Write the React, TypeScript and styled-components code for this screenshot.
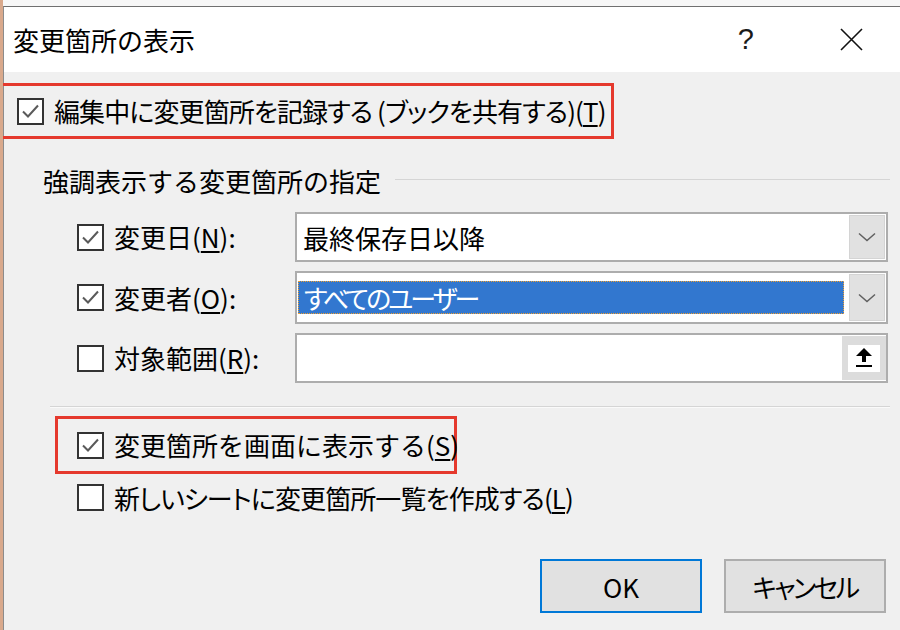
import React from 'react';
import styled, { createGlobalStyle } from 'styled-components';

const GlobalStyle = createGlobalStyle`
  html, body {
    margin: 0;
    padding: 0;
  }
  body {
    background: #f7f7f7;
    font-family: "Noto Sans CJK JP", "Noto Sans", sans-serif;
    color: #000;
  }
`;

const Page = styled.div`
  width: 900px;
  height: 630px;
  box-sizing: border-box;
  overflow: hidden;
  padding-top: 6px;
  border-left: 3px solid #d9a98c;
  background: #f7f7f7;
`;

const Window = styled.div`
  height: 100%;
  display: flex;
  flex-direction: column;
  border-top: 1px solid #707070;
  border-left: 1px solid #8c8c8c;
  background: #f0f0f0;
`;

const TitleBar = styled.div`
  height: 65px;
  flex-shrink: 0;
  display: flex;
  align-items: center;
  padding-left: 9px;
  background: #fff;
`;

const Title = styled.div`
  flex: 1;
  font-size: 26px;
  line-height: 1;
`;

const HelpMark = styled.div`
  font-family: "Liberation Sans", sans-serif;
  font-size: 29px;
  line-height: 1;
  color: #1a1a1a;
  margin-right: 86px;
`;

const CloseIcon = styled.svg`
  width: 23px;
  height: 23px;
  margin-right: 37px;
`;

const Body = styled.div`
  flex: 1;
  display: flex;
  flex-direction: column;
`;

const Highlight = styled.div<{ $left: number; $width: number; $height: number; $pad: number; $top: number }>`
  margin-top: ${p => p.$top}px;
  margin-left: ${p => p.$left}px;
  width: ${p => p.$width}px;
  height: ${p => p.$height}px;
  box-sizing: border-box;
  border: 3px solid #e5392d;
  padding-left: ${p => p.$pad}px;
  display: flex;
  align-items: center;
`;

/* proportional kana, closer to the narrow UI font of the dialog */
const CheckOption = styled.label<{ $tight?: boolean }>`
  display: flex;
  align-items: center;
  gap: 10px;
  font-size: 26px;
  line-height: 1;
  white-space: nowrap;
  font-feature-settings: ${p => (p.$tight ? '"palt"' : 'normal')};
  letter-spacing: ${p => (p.$tight ? '-0.9px' : 'normal')};
`;

const Box = styled.span`
  width: 27px;
  height: 27px;
  box-sizing: border-box;
  border: 2px solid #333;
  background: #fff;
  display: flex;
  align-items: center;
  justify-content: center;
  flex-shrink: 0;
`;

const Key = styled.u`
  text-decoration-thickness: 2px;
  text-underline-offset: 3px;
`;

const GroupHeader = styled.div`
  margin-top: 24px;
  margin-left: 39px;
  margin-right: 10px;
  height: 34px;
  display: flex;
  align-items: center;
  gap: 14px;
  font-size: 26px;
`;

const GroupLine = styled.div`
  flex: 1;
  height: 1px;
  background: #d5d5d5;
  margin-top: -2px;
`;

const Fields = styled.div`
  margin-top: 15px;
  margin-left: 73px;
  display: grid;
  grid-template-columns: 218px 593px;
  row-gap: 9px;
  align-items: center;
`;

const Combo = styled.div<{ $h: number }>`
  height: ${p => p.$h}px;
  box-sizing: border-box;
  border: 2px solid #adadad;
  background: #fff;
  display: flex;
`;

const ComboText = styled.div`
  flex: 1;
  display: flex;
  align-items: center;
  padding-left: 6px;
  font-size: 26px;
`;

const Selection = styled.div`
  flex: 1;
  display: flex;
  align-items: center;
  margin: 8px 3px 8px 1px;
  padding-left: 5px;
  background: #3277cf;
  border: 1px dotted #f0a030;
  color: #fff;
  font-size: 26px;
  font-feature-settings: "palt";
  letter-spacing: -3px;
`;

const DropButton = styled.div`
  width: 34px;
  margin: 1px 1px 1px 2px;
  background: #e1e1e1;
  border: 1px solid #d4d4d4;
  display: flex;
  align-items: center;
  justify-content: center;
`;

const UploadButton = styled.div`
  width: 44px;
  margin: 1px 0 1px 0;
  background: #dcdcdc;
  display: flex;
  align-items: center;
  justify-content: center;
`;

const UploadFace = styled.div`
  width: 32px;
  height: 27px;
  background: #fff;
  display: flex;
`;

const Divider = styled.div`
  margin-top: 23px;
  margin-left: 46px;
  margin-right: 10px;
  border-top: 1px solid #d5d5d5;
  border-bottom: 1px solid #fafafa;
`;

const PlainRow = styled.div`
  margin-top: 10px;
  margin-left: 73px;
  height: 27px;
  display: flex;
  align-items: center;
`;

const ButtonRow = styled.div`
  margin-top: 48px;
  padding-right: 14px;
  display: flex;
  justify-content: flex-end;
  gap: 22px;
`;

const DialogButton = styled.button<{ $default?: boolean }>`
  width: 162px;
  height: 54px;
  box-sizing: border-box;
  background: #e1e1e1;
  border: 2px solid ${p => (p.$default ? '#0078d7' : '#adadad')};
  font-family: "Noto Sans CJK JP", "Noto Sans", sans-serif;
  font-size: 26px;
  font-feature-settings: "palt";
  letter-spacing: ${p => (p.$default ? 'normal' : '-2.5px')};
  color: #000;
  padding: 0;
`;

const Checkbox = ({ checked }: { checked?: boolean }) => (
  <Box>
    {checked && (
      <svg width="23" height="23" viewBox="0 0 23 23">
        <polyline points="4,11.5 9,16.5 19,5.5" fill="none" stroke="#5a5a5a" strokeWidth="2" />
      </svg>
    )}
  </Box>
);

const Chevron = () => (
  <svg width="18" height="10" viewBox="0 0 18 10">
    <polyline points="1,1.5 9,8.5 17,1.5" fill="none" stroke="#606060" strokeWidth="1.5" />
  </svg>
);

const UploadArrow = () => (
  <svg width="32" height="27" viewBox="0 0 32 27">
    <polygon points="8,11 16,3 24,11" fill="#000" />
    <rect x="14" y="10" width="4" height="7" fill="#000" />
    <rect x="8" y="20" width="16" height="2" fill="#000" />
  </svg>
);

export default function App() {
  return (
    <>
      <GlobalStyle />
      <Page>
        <Window>
          <TitleBar>
            <Title>変更箇所の表示</Title>
            <HelpMark>?</HelpMark>
            <CloseIcon viewBox="0 0 23 23">
              <path d="M1 1 L22 22 M22 1 L1 22" stroke="#111" strokeWidth="1.6" />
            </CloseIcon>
          </TitleBar>
          <Body>
            <Highlight $top={11} $left={-4} $width={614} $height={56} $pad={14}>
              <CheckOption $tight>
                <Checkbox checked />
                <span>
                  編集中に変更箇所を記録する (ブックを共有する)(<Key>T</Key>)
                </span>
              </CheckOption>
            </Highlight>

            <GroupHeader>
              <span>強調表示する変更箇所の指定</span>
              <GroupLine />
            </GroupHeader>

            <Fields>
              <CheckOption>
                <Checkbox checked />
                <span>
                  変更日(<Key>N</Key>):
                </span>
              </CheckOption>
              <Combo $h={50}>
                <ComboText>最終保存日以降</ComboText>
                <DropButton>
                  <Chevron />
                </DropButton>
              </Combo>

              <CheckOption>
                <Checkbox checked />
                <span>
                  変更者(<Key>O</Key>):
                </span>
              </CheckOption>
              <Combo $h={53}>
                <Selection>すべてのユーザー</Selection>
                <DropButton>
                  <Chevron />
                </DropButton>
              </Combo>

              <CheckOption>
                <Checkbox />
                <span>
                  対象範囲(<Key>R</Key>):
                </span>
              </CheckOption>
              <Combo $h={50}>
                <ComboText />
                <UploadButton>
                  <UploadFace>
                    <UploadArrow />
                  </UploadFace>
                </UploadButton>
              </Combo>
            </Fields>

            <Divider />

            <Highlight $top={8} $left={51} $width={402} $height={58} $pad={19}>
              <CheckOption>
                <Checkbox checked />
                <span>
                  変更箇所を画面に表示する(<Key>S</Key>)
                </span>
              </CheckOption>
            </Highlight>

            <PlainRow>
              <CheckOption $tight>
                <Checkbox />
                <span>
                  新しいシートに変更箇所一覧を作成する(<Key>L</Key>)
                </span>
              </CheckOption>
            </PlainRow>

            <ButtonRow>
              <DialogButton $default>OK</DialogButton>
              <DialogButton>キャンセル</DialogButton>
            </ButtonRow>
          </Body>
        </Window>
      </Page>
    </>
  );
}
